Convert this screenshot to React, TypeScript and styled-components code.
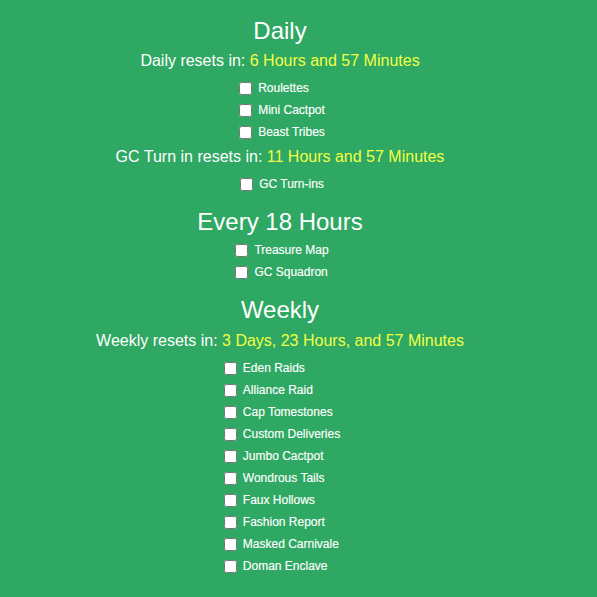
import React from "react";
import styled, { createGlobalStyle } from "styled-components";

const Global = createGlobalStyle`
  html, body {
    margin: 0;
    padding: 0;
    background: #2ea862;
  }
  body {
    font-family: "Liberation Sans", Arial, sans-serif;
    color: #ffffff;
  }
`;

const Page = styled.main`
  width: 560px;
  padding-top: 17px;
  display: flex;
  flex-direction: column;
  align-items: center;
  text-align: center;
`;

const Heading = styled.h2<{ $top?: number }>`
  margin: ${(p) => p.$top ?? 0}px 0 0;
  font-size: 24px;
  font-weight: normal;
  line-height: 28px;
`;

const Reset = styled.div<{ $top: number }>`
  margin-top: ${(p) => p.$top}px;
  font-size: 16px;
  line-height: 20px;
`;

const Time = styled.span`
  color: #f2ff45;
`;

const List = styled.div<{ $top: number }>`
  margin-top: ${(p) => p.$top}px;
  display: flex;
  flex-direction: column;
  align-items: flex-start;
  text-align: left;
`;

const Item = styled.label`
  display: flex;
  align-items: center;
  height: 22px;
  font-size: 12px;
  -webkit-text-stroke: 0.15px #ffffff;
`;

const Box = styled.input`
  width: 13px;
  height: 13px;
  margin: 0 6px 0 4px;
`;

const Check = ({ label }: { label: string }) => (
  <Item>
    <Box type="checkbox" />
    {label}
  </Item>
);

const App = () => (
  <>
    <Global />
    <Page>
      <Heading>Daily</Heading>
      <Reset $top={6}>
        Daily resets in: <Time>6 Hours and 57 Minutes</Time>
      </Reset>
      <List $top={6}>
        {["Roulettes", "Mini Cactpot", "Beast Tribes"].map((l) => (
          <Check key={l} label={l} />
        ))}
      </List>
      <Reset $top={4}>
        GC Turn in resets in: <Time>11 Hours and 57 Minutes</Time>
      </Reset>
      <List $top={6}>
        <Check label="GC Turn-ins" />
      </List>

      <Heading $top={13}>Every 18 Hours</Heading>
      <List $top={3}>
        {["Treasure Map", "GC Squadron"].map((l) => (
          <Check key={l} label={l} />
        ))}
      </List>

      <Heading $top={13}>Weekly</Heading>
      <Reset $top={7}>
        Weekly resets in: <Time>3 Days, 23 Hours, and 57 Minutes</Time>
      </Reset>
      <List $top={6}>
        {[
          "Eden Raids",
          "Alliance Raid",
          "Cap Tomestones",
          "Custom Deliveries",
          "Jumbo Cactpot",
          "Wondrous Tails",
          "Faux Hollows",
          "Fashion Report",
          "Masked Carnivale",
          "Doman Enclave",
        ].map((l) => (
          <Check key={l} label={l} />
        ))}
      </List>
    </Page>
  </>
);

export default App;
